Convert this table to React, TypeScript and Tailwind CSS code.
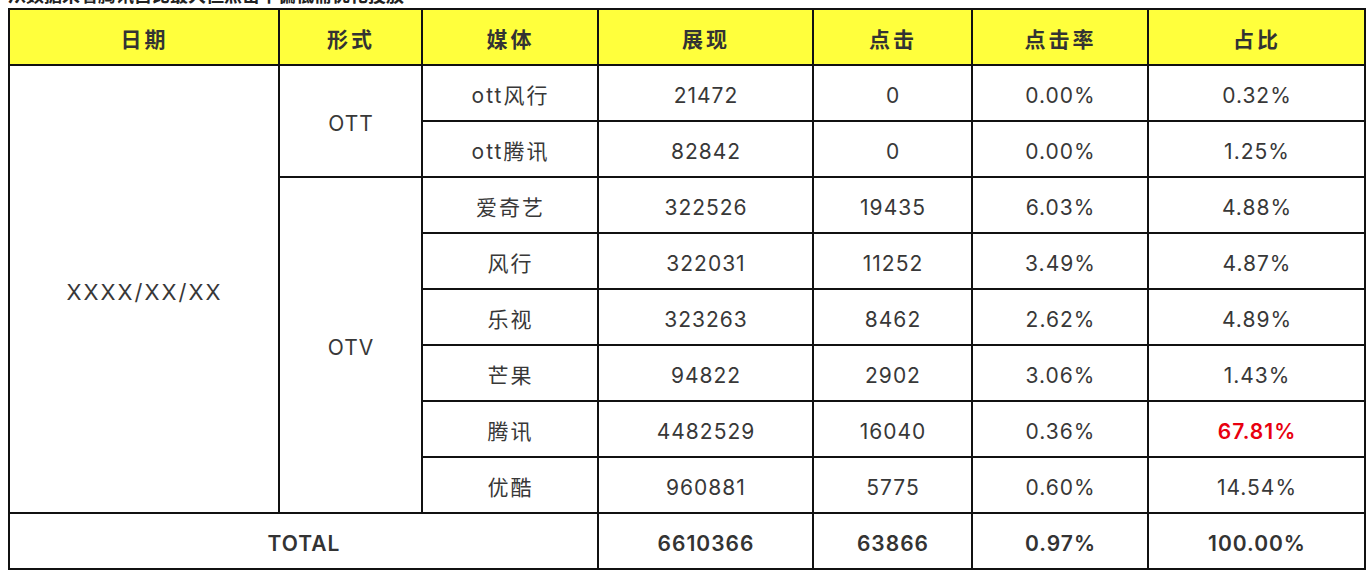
import React from 'react';

const font = { fontFamily: 'Inter, "Noto Sans CJK SC", sans-serif' };

const headers = ['日期', '形式', '媒体', '展现', '点击', '点击率', '占比'];

const rows = [
    { media: 'ott风行', show: '21472', click: '0', ctr: '0.00%', share: '0.32%' },
    { media: 'ott腾讯', show: '82842', click: '0', ctr: '0.00%', share: '1.25%' },
    { media: '爱奇艺', show: '322526', click: '19435', ctr: '6.03%', share: '4.88%' },
    { media: '风行', show: '322031', click: '11252', ctr: '3.49%', share: '4.87%' },
    { media: '乐视', show: '323263', click: '8462', ctr: '2.62%', share: '4.89%' },
    { media: '芒果', show: '94822', click: '2902', ctr: '3.06%', share: '1.43%' },
    { media: '腾讯', show: '4482529', click: '16040', ctr: '0.36%', share: '67.81%', hot: true },
    { media: '优酷', show: '960881', click: '5775', ctr: '0.60%', share: '14.54%' },
];

// shared cell look; pt nudges text down to sit like the reference
const cell = 'border-2 border-[#111] text-center align-middle pt-[6px] pl-[1px]';

export default function App() {
    return (
        <div className="bg-white min-h-[580px] pl-[8px] text-[#383838]" style={font}>
            <div className="h-[8px] overflow-hidden flex items-end">
                <div className="text-[18px] font-bold leading-[24px] text-[#222] whitespace-nowrap">
                    从数据来看腾讯占比最大但点击率偏低需优化投放
                </div>
            </div>
            <table className="border-collapse table-fixed w-[1356px] text-[21px] tracking-[1px]">
                <colgroup>
                    <col className="w-[270px]" />
                    <col className="w-[143px]" />
                    <col className="w-[176px]" />
                    <col className="w-[215px]" />
                    <col className="w-[159px]" />
                    <col className="w-[176px]" />
                    <col className="w-[217px]" />
                </colgroup>
                <thead>
                    <tr className="h-[56px] bg-[#ffff3c]">
                        {headers.map((h) => (
                            <th key={h} className={`${cell} font-bold text-[21px] tracking-[3px] text-[#333]`}>{h}</th>
                        ))}
                    </tr>
                </thead>
                <tbody>
                    {rows.map((r, i) => (
                        <tr key={r.media} className="h-[56px]">
                            {i === 0 && <td rowSpan={8} className={`${cell} text-[22px] tracking-[2px]`}>XXXX/XX/XX</td>}
                            {i === 0 && <td rowSpan={2} className={cell}>OTT</td>}
                            {i === 2 && <td rowSpan={6} className={cell}>OTV</td>}
                            <td className={`${cell} tracking-[2px]`}>{r.media}</td>
                            <td className={cell}>{r.show}</td>
                            <td className={cell}>{r.click}</td>
                            <td className={cell}>{r.ctr}</td>
                            <td className={`${cell} ${r.hot ? 'text-[#e8000f] font-semibold' : ''}`}>{r.share}</td>
                        </tr>
                    ))}
                    <tr className="h-[56px] font-semibold text-[#333]">
                        <td colSpan={3} className={cell}>TOTAL</td>
                        <td className={cell}>6610366</td>
                        <td className={cell}>63866</td>
                        <td className={cell}>0.97%</td>
                        <td className={cell}>100.00%</td>
                    </tr>
                </tbody>
            </table>
        </div>
    );
}
